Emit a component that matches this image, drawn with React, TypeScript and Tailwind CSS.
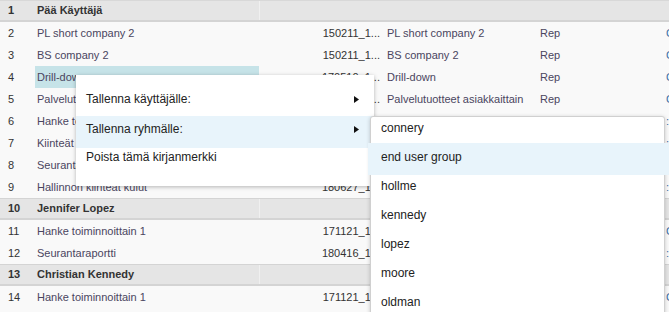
import React from "react";

type Row = {
  n: number;
  name: string;
  group?: boolean;
  id?: string;
  title?: string;
  type?: string;
  last?: string;
  hl?: boolean;
};

const rows: Row[] = [
  { n: 1, name: "Pää Käyttäjä", group: true },
  { n: 2, name: "PL short company 2", id: "150211_1...", title: "PL short company 2", type: "Rep", last: "C" },
  { n: 3, name: "BS company 2", id: "150211_1...", title: "BS company 2", type: "Rep", last: "C" },
  { n: 4, name: "Drill-down", id: "170510_1...", title: "Drill-down", type: "Rep", last: "C", hl: true },
  { n: 5, name: "Palvelutuotteet asiakkaittain", id: "170510_1...", title: "Palvelutuotteet asiakkaittain", type: "Rep", last: "C" },
  { n: 6, name: "Hanke toiminnoittain 1", id: "171121_1...", title: "Hanke toiminnoittain 1", type: "Rep", last: ":" },
  { n: 7, name: "Kiinteät kulut", id: "180627_1...", title: "Kiinteät kulut", type: "Rep", last: ":" },
  { n: 8, name: "Seurantaraportti", id: "180416_1...", title: "Seurantaraportti", type: "Rep", last: ":" },
  { n: 9, name: "Hallinnon kiinteät kulut", id: "180627_1...", title: "Hallinnon kiinteät kulut", type: "Rep", last: ":" },
  { n: 10, name: "Jennifer Lopez", group: true },
  { n: 11, name: "Hanke toiminnoittain 1", id: "171121_1...", title: "Hanke toiminnoittain 1", type: "Rep", last: "C" },
  { n: 12, name: "Seurantaraportti", id: "180416_1...", title: "Seurantaraportti", type: "Rep", last: ":" },
  { n: 13, name: "Christian Kennedy", group: true },
  { n: 14, name: "Hanke toiminnoittain 1", id: "171121_1...", title: "Hanke toiminnoittain 1", type: "Rep", last: "C" },
];

const groups = ["connery", "end user group", "hollme", "kennedy", "lopez", "moore", "oldman", "smith"];

function Arrow() {
  return (
    <svg width="5" height="7" viewBox="0 0 5 7" className="block">
      <path d="M0 0 L5 3.5 L0 7 Z" fill="#111" />
    </svg>
  );
}

export default function App() {
  return (
    <div className="relative w-[669px] h-[312px] overflow-hidden bg-[#f9f9f9] font-['Liberation_Sans',Arial,sans-serif]">
      <div className="flex flex-col">
        {rows.map((r) =>
          r.group ? (
            <div
              key={r.n}
              className="flex h-[22px] items-center bg-[#e5e5e5] border-b-2 border-[#d4d4d4] text-[11px] font-bold text-[#333] first:border-t first:border-t-[#d8d8d8] [&:not(:first-child)]:border-t [&:not(:first-child)]:border-t-[#d4d4d4]"
            >
              <div className="w-[35px] shrink-0 pl-[8px]">{r.n}</div>
              <div className="w-[224px] shrink-0 pl-[2px] self-stretch flex items-center">{r.name}</div>
              <div className="w-px self-stretch bg-[#f0f0f0]" />
              <div className="flex-1" />
            </div>
          ) : (
            <div key={r.n} className="flex h-[22px] items-center text-[11px] text-[#333]">
              <div className="w-[35px] shrink-0 pl-[8px]">{r.n}</div>
              <div
                className={`w-[224px] shrink-0 pl-[2px] self-stretch flex items-center text-[#4a4560] whitespace-nowrap overflow-hidden ${
                  r.hl ? "bg-[#c6e3e8]" : ""
                }`}
              >
                {r.name}
              </div>
              <div className="w-px self-stretch bg-[#d8d8d8]" />
              <div className="w-[124px] shrink-0 pr-[3px] text-right whitespace-nowrap">{r.id}</div>
              <div className="w-[153px] shrink-0 pl-[4px] whitespace-nowrap overflow-hidden text-[#4a4560]">{r.title}</div>
              <div className="w-[126px] shrink-0 pl-[4px] text-[#4a4560]">{r.type}</div>
              <div className="shrink-0 pl-[4px] text-[#3a6ea5] whitespace-nowrap">{r.last}</div>
            </div>
          )
        )}
      </div>

      {/* context menu */}
      <div className="absolute left-[76px] top-[75px] w-[298px] h-[111px] bg-white shadow-[0_1px_4px_rgba(0,0,0,0.28)] text-[12px] text-[#222] flex flex-col">
        <div className="h-[41px] flex items-start justify-between pl-[10px] pr-[15px] pt-[13px]">
          <span className="leading-[22px]">Tallenna käyttäjälle:</span>
          <span className="pt-[8px]">
            <Arrow />
          </span>
        </div>
        <div className="h-[32px] flex items-start justify-between pl-[10px] pr-[15px] pt-[2px] bg-[#e8f4fb]">
          <span className="leading-[22px]">Tallenna ryhmälle:</span>
          <span className="pt-[8px]">
            <Arrow />
          </span>
        </div>
        <div className="flex-1 pl-[10px] leading-[18px]">Poista tämä kirjanmerkki</div>
      </div>

      {/* submenu */}
      <div className="absolute left-[370px] top-[116px] w-[295px] h-[220px] bg-white border border-[#d0d0d0] rounded-t-[3px] shadow-[0_1px_4px_rgba(0,0,0,0.2)] text-[12px] text-[#222] flex flex-col">
        {groups.map((g, i) => (
          <div key={g} className="relative h-[29px] shrink-0 pl-[10px]">
            {i === 1 && <div className="absolute -left-[3px] -right-[5px] -top-[3px] h-[32px] bg-[#e8f4fb]" />}
            <span className="relative block leading-[22px]">{g}</span>
          </div>
        ))}
      </div>
    </div>
  );
}
